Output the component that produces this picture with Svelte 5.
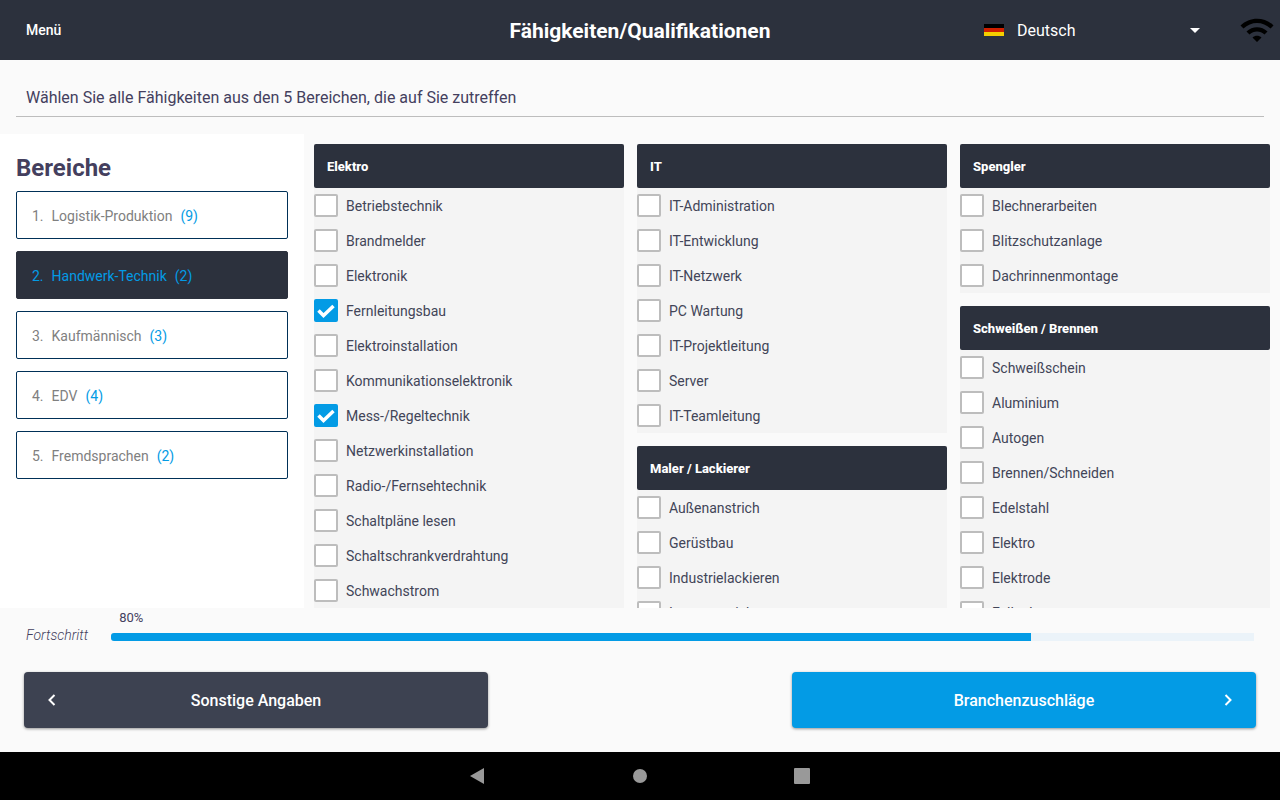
<script lang="ts">
    type Area = { name: string; count: number };
    type Group = { title: string; items: string[] };

    let areas = $state<Area[]>([
        { name: 'Logistik-Produktion', count: 9 },
        { name: 'Handwerk-Technik', count: 2 },
        { name: 'Kaufmännisch', count: 3 },
        { name: 'EDV', count: 4 },
        { name: 'Fremdsprachen', count: 2 }
    ]);
    let active = $state(1);
    let progress = 80;
    let language = $state('Deutsch');

    const columns: Group[][] = [
        [
            {
                title: 'Elektro',
                items: [
                    'Betriebstechnik', 'Brandmelder', 'Elektronik', 'Fernleitungsbau',
                    'Elektroinstallation', 'Kommunikationselektronik', 'Mess-/Regeltechnik',
                    'Netzwerkinstallation', 'Radio-/Fernsehtechnik', 'Schaltpläne lesen',
                    'Schaltschrankverdrahtung', 'Schwachstrom'
                ]
            }
        ],
        [
            {
                title: 'IT',
                items: [
                    'IT-Administration', 'IT-Entwicklung', 'IT-Netzwerk', 'PC Wartung',
                    'IT-Projektleitung', 'Server', 'IT-Teamleitung'
                ]
            },
            {
                title: 'Maler / Lackierer',
                items: ['Außenanstrich', 'Gerüstbau', 'Industrielackieren', 'Innenanstrich']
            }
        ],
        [
            { title: 'Spengler', items: ['Blechnerarbeiten', 'Blitzschutzanlage', 'Dachrinnenmontage'] },
            {
                title: 'Schweißen / Brennen',
                items: [
                    'Schweißschein', 'Aluminium', 'Autogen', 'Brennen/Schneiden',
                    'Edelstahl', 'Elektro', 'Elektrode', 'Fallnaht'
                ]
            }
        ]
    ];

    let selected = $state(['Fernleitungsbau', 'Mess-/Regeltechnik']);
</script>

<div class="app">
    <header>
        <button class="menu">Menü</button>
        <h1>Fähigkeiten/Qualifikationen</h1>
        <div class="status">
            <div class="language">
                <svg class="flag" viewBox="0 0 20 12" aria-hidden="true">
                    <rect width="20" height="4" fill="#000" />
                    <rect y="4" width="20" height="4" fill="#d02000" />
                    <rect y="8" width="20" height="4" fill="#f5cf00" />
                </svg>
                <select bind:value={language} aria-label="Sprache">
                    <option>Deutsch</option>
                    <option>English</option>
                </select>
                <svg class="caret" viewBox="0 0 10 5" aria-hidden="true"><path d="M0 0h10L5 5z" fill="#fff" /></svg>
            </div>
            <svg class="wifi" viewBox="0 0 24 24" aria-hidden="true">
                <path d="M1 9l2 2c4.970-4.970 13.030-4.970 18 0l2-2C16.930 2.930 7.080 2.930 1 9zm8 8l3 3 3-3c-1.650-1.660-4.340-1.660-6 0zm-4-4l2 2c2.760-2.760 7.240-2.760 10 0l2-2C15.140 9.140 8.870 9.140 5 13z" />
            </svg>
        </div>
    </header>

    <p class="intro">Wählen Sie alle Fähigkeiten aus den 5 Bereichen, die auf Sie zutreffen</p>

    <main>
        <nav>
            <h2>Bereiche</h2>
            {#each areas as area, i}
                <button class="area" class:active={active === i} onclick={() => (active = i)}>
                    <span>{i + 1}.</span>
                    <span>{area.name}</span>
                    <span class="count">({area.count})</span>
                </button>
            {/each}
        </nav>

        <div class="columns">
            {#each columns as column}
                <div class="column">
                    {#each column as group}
                        <section>
                            <h3>{group.title}</h3>
                            {#each group.items as item}
                                <label>
                                    <span class="box">
                                        <input type="checkbox" value={item} bind:group={selected} />
                                        <svg viewBox="0 0 24 23" aria-hidden="true">
                                            <path d="M4.500 11.500l5 5L19.500 7" fill="none" stroke="#fff" stroke-width="3.500" />
                                        </svg>
                                    </span>
                                    <span class="skill">{item}</span>
                                </label>
                            {/each}
                        </section>
                    {/each}
                </div>
            {/each}
        </div>
    </main>

    <footer>
        <div class="progress">
            <span class="progress-label">Fortschritt</span>
            <div class="progress-body">
                <span class="percent">{progress}%</span>
                <div class="track">
                    <div class="bar" style="width: {progress + 0.5}%"></div>
                </div>
            </div>
        </div>
        <div class="actions">
            <button class="back">
                <svg viewBox="0 0 8 12" aria-hidden="true"><path d="M6.500 1l-5 5 5 5" /></svg>
                <span>Sonstige Angaben</span>
            </button>
            <button class="next">
                <span>Branchenzuschläge</span>
                <svg viewBox="0 0 8 12" aria-hidden="true"><path d="M1.500 1l5 5-5 5" /></svg>
            </button>
        </div>
    </footer>

    <div class="system-bar">
        <button aria-label="Zurück">
            <svg viewBox="0 0 16 16"><path d="M14 0v16L0 8z" /></svg>
        </button>
        <button aria-label="Startseite">
            <svg viewBox="0 0 16 16"><circle cx="8" cy="8" r="7" /></svg>
        </button>
        <button aria-label="Übersicht">
            <svg viewBox="0 0 16 16"><rect width="16" height="16" rx="1" /></svg>
        </button>
    </div>
</div>

<style>
    :global(body) {
        margin: 0;
    }

    .app {
        display: flex;
        flex-direction: column;
        height: 100vh;
        background: #fafafa;
        color: #443f5e;
        font-family: Roboto, sans-serif;
        font-size: 14px;
    }

    h1, h2, h3, p {
        margin: 0;
    }

    button {
        border: 0;
        padding: 0;
        background: none;
        font: inherit;
        color: inherit;
        cursor: pointer;
    }

    header {
        display: grid;
        grid-template-columns: 1fr auto 1fr;
        align-items: center;
        height: 60px;
        flex: none;
        background: #2c313d;
        color: #fff;
    }

    .menu {
        justify-self: start;
        padding: 8px 26px;
        font-weight: 500;
    }

    h1 {
        padding-top: 2px;
        font-size: 21px;
        font-weight: 700;
        line-height: 28px;
    }

    .status {
        display: flex;
        justify-content: flex-end;
        align-items: center;
        gap: 39px;
        padding-right: 5px;
    }

    .language {
        display: grid;
        grid-template-columns: 20px 188px;
        align-items: center;
        column-gap: 8px;
    }

    .flag {
        width: 20px;
        height: 12px;
    }

    select {
        grid-area: 1 / 2;
        appearance: none;
        border: 0;
        padding: 0 5px;
        background: none;
        color: #fff;
        font: 16px Roboto, sans-serif;
        height: 32px;
    }

    option {
        color: #2c313d;
    }

    .caret {
        grid-area: 1 / 2;
        justify-self: end;
        width: 10px;
        height: 5px;
        pointer-events: none;
    }

    .wifi {
        width: 36px;
        height: 36px;
    }

    .intro {
        flex: none;
        margin: 24px 16px 17px;
        padding: 0 10px 5px;
        border-bottom: 1px solid #bdbdbd;
        font-size: 16px;
        line-height: 27px;
    }

    main {
        display: flex;
        flex: 1;
        min-height: 0;
    }

    nav {
        display: flex;
        flex-direction: column;
        gap: 12px;
        box-sizing: border-box;
        width: 304px;
        flex: none;
        padding: 18px 16px 0;
        background: #fff;
    }

    h2 {
        margin-bottom: -5px;
        font-size: 24px;
        font-weight: 700;
        line-height: 32px;
    }

    .area {
        display: flex;
        align-items: center;
        gap: 8px;
        height: 48px;
        padding: 2px 15px 0;
        border: 1px solid #003057;
        border-radius: 2px;
        color: #808080;
        text-align: left;
    }

    .area.active {
        background: #2c313d;
        border-color: #2c313d;
        color: #039be5;
    }

    .count {
        color: #039be5;
    }

    .columns {
        display: grid;
        grid-template-columns: repeat(3, 1fr);
        gap: 13px;
        flex: 1;
        padding: 10px 10px 0;
        overflow: hidden;
    }

    .column {
        display: flex;
        flex-direction: column;
        gap: 13px;
    }

    section {
        background: #f4f4f4;
    }

    h3 {
        height: 44px;
        padding: 0 13px;
        background: #2c313d;
        border-radius: 2px;
        color: #fff;
        font-size: 13px;
        font-weight: 800;
        line-height: 46px;
    }

    label {
        display: flex;
        gap: 8px;
        height: 35px;
    }

    .skill {
        color: #424558;
        line-height: 37px;
    }

    .box {
        display: grid;
        width: 24px;
        height: 23px;
        margin-top: 6px;
    }

    .box input {
        grid-area: 1 / 1;
        appearance: none;
        box-sizing: border-box;
        width: 24px;
        height: 23px;
        margin: 0;
        border: 2px solid #bdbdbd;
        border-radius: 2px;
        background: #fff;
    }

    .box input:checked {
        border-color: #039be5;
        background: #039be5;
    }

    .box svg {
        grid-area: 1 / 1;
        width: 24px;
        height: 23px;
        pointer-events: none;
        visibility: hidden;
    }

    .box input:checked + svg {
        visibility: visible;
    }

    footer {
        flex: none;
        padding-bottom: 24px;
    }

    .progress {
        display: flex;
        align-items: flex-end;
        gap: 23px;
        padding: 0 26px 31px;
    }

    .progress-label {
        font-style: italic;
        font-weight: 300;
        line-height: 12px;
    }

    .progress-body {
        flex: 1;
    }

    .percent {
        display: block;
        padding: 2px 8px 7px;
        font-size: 13px;
        line-height: 16px;
    }

    .track {
        height: 8px;
        overflow: hidden;
        border-radius: 3px 0 0 3px;
        background: #ebf3f9;
    }

    .bar {
        height: 8px;
        background: #039be5;
    }

    .actions {
        display: flex;
        justify-content: space-between;
        padding: 0 24px;
    }

    .actions button {
        display: grid;
        grid-template-columns: 8px 1fr 8px;
        align-items: center;
        width: 464px;
        height: 56px;
        padding: 0 24px;
        border-radius: 4px;
        box-shadow: 0 1px 3px rgba(0, 0, 0, 0.4);
        color: #fff;
        font-size: 16px;
        font-weight: 500;
    }

    .actions span {
        grid-column: 2;
    }

    .actions .back {
        background: #3d4251;
    }

    .actions .next {
        background: #039be5;
    }

    .actions svg {
        width: 8px;
        height: 12px;
        fill: none;
        stroke: #fff;
        stroke-width: 2;
    }

    .system-bar {
        display: flex;
        justify-content: center;
        align-items: center;
        gap: 146px;
        flex: none;
        height: 48px;
        background: #000;
    }

    .system-bar button {
        display: flex;
    }

    .system-bar svg {
        width: 16px;
        height: 16px;
        fill: #999;
    }
</style>
